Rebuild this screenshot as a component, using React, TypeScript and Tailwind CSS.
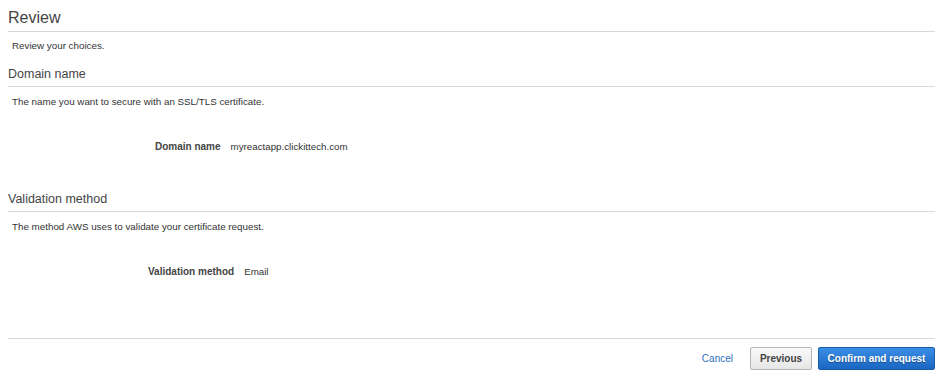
import React from 'react';

const font = { fontFamily: '"Liberation Sans", Arial, sans-serif' };

const SectionHeader: React.FC<{ title: string }> = ({ title }) => (
  <div className="h-[22px] border-b border-[#d9d9d9] flex items-end pb-[5px]">
    <h2 className="text-[12.5px] leading-none text-[#444]">{title}</h2>
  </div>
);

const App: React.FC = () => {
  return (
    <div className="w-[941px] h-[379px] bg-white text-[#333] px-[8px]" style={font}>
      <div className="w-[927px]">
        <div className="h-[32px] border-b border-[#d9d9d9] flex items-end pb-[5px]">
          <h1 className="text-[16px] leading-none text-[#444]">Review</h1>
        </div>
        <p className="text-[9.8px] leading-none pl-[4px] mt-[9px]">Review your choices.</p>

        <div className="mt-[14px]">
          <SectionHeader title="Domain name" />
          <p className="text-[9.8px] leading-none pl-[4px] mt-[10px]">
            The name you want to secure with an SSL/TLS certificate.
          </p>
          <div className="flex items-baseline gap-[10px] pl-[147px] mt-[35px] text-[10px] leading-none">
            <span className="font-bold text-[#444]">Domain name</span>
            <span className="text-[9.75px]">myreactapp.clickittech.com</span>
          </div>
        </div>

        <div className="mt-[38px]">
          <SectionHeader title="Validation method" />
          <p className="text-[9.8px] leading-none pl-[4px] mt-[10px]">
            The method AWS uses to validate your certificate request.
          </p>
          <div className="flex items-baseline gap-[10px] pl-[140px] mt-[36px] text-[10px] leading-none">
            <span className="font-bold text-[#444]">Validation method</span>
            <span className="text-[9.75px]">Email</span>
          </div>
        </div>

        <div className="mt-[61px] border-t border-[#d9d9d9] pt-[8px] flex items-center justify-end">
          <button className="text-[10px] text-[#2d6fc2] h-[23px] mr-[17px]">Cancel</button>
          <button className="h-[23px] w-[62px] rounded-[2px] border border-[#b5b5b5] bg-gradient-to-b from-[#fafafa] to-[#e6e6e6] text-[10px] font-bold text-[#444] mr-[6px]">
            Previous
          </button>
          <button
            className="h-[23px] w-[117px] rounded-[2px] border border-[#1a5ca8] bg-gradient-to-b from-[#3a8ee6] to-[#1a66c2] text-[10px] font-bold text-white"
            style={{ textShadow: '0 1px 1px rgba(0,0,0,0.35)' }}
          >
            Confirm and request
          </button>
        </div>
      </div>
    </div>
  );
};

export default App;
